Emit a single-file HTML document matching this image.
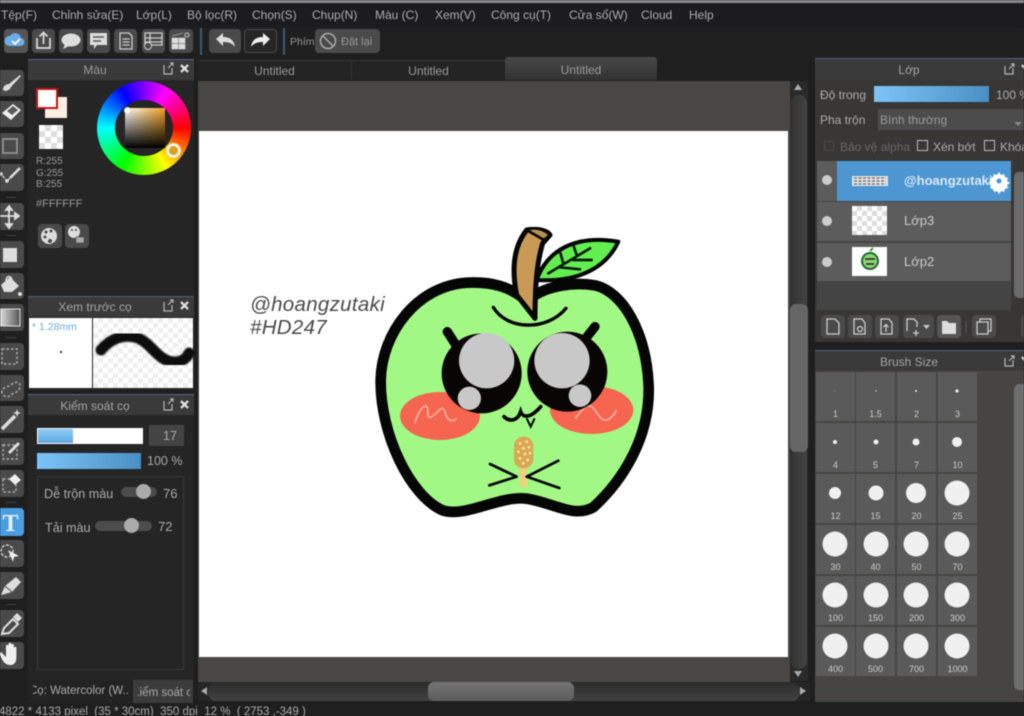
<!DOCTYPE html>
<html lang="vi"><head><meta charset="utf-8"><title>MediBang Paint</title>
<style>
html,body{margin:0;padding:0;background:#1f1f1f}
#a{position:relative;width:1024px;height:716px;overflow:hidden;background:#1f1f1f;font-family:"Liberation Sans",sans-serif;color:#adadad;font-size:12px;filter:blur(.5px)}
#a div{position:absolute;box-sizing:border-box}
.t{white-space:nowrap;line-height:14px}
.b{background:#4a4a4a;border-radius:4px}
.h{background:#3b3a3a;border-top:1px solid #4b6a85}
.c{text-align:center}
.cell{background:#5a5a5a;width:39px;height:49px}
.n{font-size:9px;color:#ccc;white-space:nowrap;line-height:10px;text-align:center;width:39px}
svg{position:absolute;left:0;top:0}
</style></head><body><div id="a">
<div style="left:0;top:0;width:1024px;height:3px;background:#8a8a8a"></div>
<div style="left:0;top:3px;width:1024px;height:24px;background:#1c1c1e"></div>
<div class="t" style="left:1px;top:8px">Tệp(F)</div>
<div class="t" style="left:52px;top:8px">Chỉnh sửa(E)</div>
<div class="t" style="left:136px;top:8px">Lớp(L)</div>
<div class="t" style="left:187px;top:8px">Bộ lọc(R)</div>
<div class="t" style="left:252px;top:8px">Chọn(S)</div>
<div class="t" style="left:312px;top:8px">Chụp(N)</div>
<div class="t" style="left:375px;top:8px">Màu (C)</div>
<div class="t" style="left:435px;top:8px">Xem(V)</div>
<div class="t" style="left:491px;top:8px">Công cụ(T)</div>
<div class="t" style="left:569px;top:8px">Cửa sổ(W)</div>
<div class="t" style="left:641px;top:8px">Cloud</div>
<div class="t" style="left:689px;top:8px">Help</div>

<!-- toolbar buttons -->
<div class="b" style="left:4px;top:29px;width:24px;height:24px;background:#555"></div>
<div class="b" style="left:32px;top:29px;width:23px;height:24px"></div>
<div class="b" style="left:59px;top:29px;width:24px;height:24px"></div>
<div class="b" style="left:87px;top:29px;width:23px;height:24px"></div>
<div class="b" style="left:114px;top:29px;width:23px;height:24px"></div>
<div class="b" style="left:142px;top:29px;width:23px;height:24px"></div>
<div class="b" style="left:169px;top:29px;width:24px;height:24px"></div>
<div style="left:200px;top:28px;width:2px;height:27px;background:#3f5a72"></div>
<div class="b" style="left:209px;top:29px;width:32px;height:24px"></div>
<div class="b" style="left:244px;top:29px;width:33px;height:24px;background:#262626;border:1px solid #4a4a4a"></div>
<div style="left:283px;top:28px;width:2px;height:27px;background:#3f5a72"></div>
<div class="t" style="left:290px;top:35px;font-size:10.5px;color:#999">Phím</div>
<div class="b" style="left:315px;top:29px;width:65px;height:24px"></div>
<div class="t" style="left:341px;top:35px;font-size:11px;color:#999">Đặt lại</div>

<!-- left tool strip -->
<div class="b" style="left:-4px;top:70px;width:28px;height:26px"></div>
<div class="b" style="left:-4px;top:101px;width:28px;height:26px"></div>
<div class="b" style="left:-4px;top:133px;width:28px;height:26px"></div>
<div class="b" style="left:-4px;top:164px;width:28px;height:27px"></div>
<div style="left:6px;top:197px;width:10px;height:1px;background:#444"></div>
<div class="b" style="left:-4px;top:203px;width:28px;height:27px"></div>
<div style="left:6px;top:235px;width:10px;height:1px;background:#444"></div>
<div class="b" style="left:-4px;top:241px;width:28px;height:27px"></div>
<div class="b" style="left:-4px;top:273px;width:28px;height:26px"></div>
<div class="b" style="left:-4px;top:304px;width:28px;height:27px"></div>
<div style="left:6px;top:337px;width:10px;height:1px;background:#444"></div>
<div class="b" style="left:-4px;top:343px;width:28px;height:27px"></div>
<div class="b" style="left:-4px;top:375px;width:28px;height:26px"></div>
<div class="b" style="left:-4px;top:406px;width:28px;height:27px"></div>
<div class="b" style="left:-4px;top:438px;width:28px;height:27px"></div>
<div class="b" style="left:-4px;top:470px;width:28px;height:27px"></div>
<div style="left:6px;top:502px;width:10px;height:1px;background:#444"></div>
<div class="b" style="left:-4px;top:508px;width:28px;height:28px;background:#4a9ee0"></div>
<div class="b" style="left:-4px;top:540px;width:28px;height:27px"></div>
<div class="b" style="left:-4px;top:572px;width:28px;height:27px"></div>
<div style="left:6px;top:604px;width:10px;height:1px;background:#444"></div>
<div class="b" style="left:-4px;top:610px;width:28px;height:27px"></div>
<div class="b" style="left:-4px;top:642px;width:28px;height:27px"></div>

<!-- colour panel -->
<div style="left:28px;top:59px;width:166px;height:236px;background:#252525"></div>
<div class="h" style="left:28px;top:59px;width:166px;height:21px"></div>
<div class="t c" style="left:28px;top:63px;width:134px;color:#999">Màu</div>
<div style="left:97px;top:81px;width:94px;height:94px;border-radius:50%;background:conic-gradient(from 90deg,#f00,#ff0 60deg,#0f0 120deg,#0ff 180deg,#00f 240deg,#f0f 300deg,#f00)"></div>
<div style="left:115px;top:100px;width:58px;height:56px;border-radius:50%;background:#252525"></div>
<div style="left:125px;top:108px;width:40px;height:40px;background:linear-gradient(to bottom,transparent,#000),linear-gradient(to right,#fff,#f0a020)"></div>
<div style="left:124px;top:107px;width:7px;height:7px;border-radius:50%;border:1px solid #ddd;background:#fff"></div>
<div style="left:166px;top:143px;width:15px;height:15px;border-radius:50%;border:3px solid #f2f2e0;background:#d8a020"></div>
<div style="left:45px;top:97px;width:22px;height:21px;background:#fdeee2"></div>
<div style="left:36px;top:88px;width:22px;height:21px;background:#fff;border:2px solid #c01818"></div>
<div style="left:39px;top:125px;width:24px;height:24px;background:repeating-conic-gradient(#ddd 0 25%,#fff 0 50%) 0 0/12px 12px"></div>
<div class="t" style="left:36px;top:156px;font-size:10px;line-height:11.5px;color:#999">R:255<br>G:255<br>B:255</div>
<div class="t" style="left:36px;top:197px;font-size:11px;color:#999">#FFFFFF</div>
<div class="b" style="left:38px;top:224px;width:24px;height:24px"></div>
<div class="b" style="left:65px;top:224px;width:24px;height:24px"></div>

<!-- brush preview -->
<div style="left:28px;top:296px;width:166px;height:94px;background:#252525"></div>
<div class="h" style="left:28px;top:296px;width:166px;height:21px"></div>
<div class="t c" style="left:28px;top:300px;width:134px;color:#a5a5a5">Xem trước cọ</div>
<div style="left:29px;top:318px;width:63px;height:70px;background:#fff"></div>
<div class="t" style="left:32px;top:320px;font-size:10.5px;color:#6aa9dc">* 1.28mm</div>
<div style="left:60px;top:351px;width:2px;height:2px;background:#333"></div>
<div style="left:93px;top:318px;width:100px;height:70px;background:repeating-conic-gradient(#eee 0 25%,#fff 0 50%) 0 0/10px 10px"></div>

<!-- brush control -->
<div style="left:28px;top:394px;width:166px;height:288px;background:#252525"></div>
<div class="h" style="left:28px;top:394px;width:166px;height:21px"></div>
<div class="t c" style="left:28px;top:399px;width:134px;color:#a5a5a5">Kiểm soát cọ</div>
<div style="left:37px;top:428px;width:106px;height:16px;background:#fff"></div>
<div style="left:38px;top:429px;width:35px;height:14px;background:linear-gradient(#8ccbf5,#5fa8e0)"></div>
<div style="left:149px;top:425px;width:35px;height:21px;background:#444"></div>
<div class="t" style="left:163px;top:429px;color:#aaa;font-size:12.5px">17</div>
<div style="left:37px;top:453px;width:104px;height:16px;background:linear-gradient(90deg,#7cc4f8,#4a8fc4)"></div>
<div class="t" style="left:147px;top:454px;color:#aaa;font-size:12.5px">100 %</div>
<div style="left:37px;top:476px;width:147px;height:194px;border:1px solid #3a3a3a"></div>
<div class="t" style="left:44px;top:487px;color:#aaa;font-size:12.6px">Dễ trộn màu</div>
<div style="left:121px;top:487px;width:36px;height:10px;border-radius:5px;background:#4c4c4c"></div>
<div style="left:136px;top:484px;width:15px;height:15px;border-radius:50%;background:#aaa"></div>
<div class="t" style="left:163px;top:487px;color:#aaa;font-size:13px">76</div>
<div class="t" style="left:45px;top:521px;color:#aaa;font-size:12.6px">Tải màu</div>
<div style="left:95px;top:521px;width:57px;height:10px;border-radius:5px;background:#4c4c4c"></div>
<div style="left:124px;top:518px;width:15px;height:15px;border-radius:50%;background:#aaa"></div>
<div class="t" style="left:158px;top:520px;color:#aaa;font-size:13px">72</div>
<div style="left:28px;top:680px;width:104px;height:23px;background:#232323"></div>
<div class="t" style="left:33px;top:684px;font-size:11.5px;color:#aaa;width:96px;overflow:hidden;text-indent:-4px">Cọ: Watercolor (W..</div>
<div style="left:133px;top:680px;width:60px;height:23px;background:#3c3c3c;overflow:hidden"></div>
<div class="t" style="left:138px;top:686px;font-size:11.5px;width:52px;overflow:hidden;color:#aaa;text-indent:-6px">Kiểm soát c</div>
<div class="t" style="left:-1px;top:705px;font-size:11.5px;color:#aaa">4822 * 4133 pixel &nbsp;(35 * 30cm) &nbsp;350 dpi &nbsp;12 % &nbsp;( 2753 ,-349 )</div>

<!-- tabs -->
<div style="left:198px;top:60px;width:455px;height:20px;background:#242424;border-top:1px solid #333"></div>
<div style="left:351px;top:60px;width:1px;height:20px;background:#333"></div>
<div style="left:505px;top:57px;width:152px;height:23px;background:linear-gradient(#484848,#333);border-radius:3px 3px 0 0"></div>
<div class="t c" style="left:198px;top:64px;width:153px;color:#999">Untitled</div>
<div class="t c" style="left:352px;top:64px;width:153px;color:#999">Untitled</div>
<div class="t c" style="left:505px;top:63px;width:152px;color:#999">Untitled</div>

<!-- canvas -->
<div style="left:198px;top:81px;width:592px;height:620px;background:#484746"></div>
<div style="left:199px;top:131px;width:589px;height:526px;background:#fff"></div>
<div class="t" style="left:250px;top:293px;font-size:20.5px;line-height:23px;font-style:italic;color:#4a4a4a;letter-spacing:.3px">@hoangzutaki<br>#HD247</div>
<div style="left:790px;top:81px;width:18px;height:600px;background:#2a2a2a"></div>
<div style="left:791px;top:95px;width:16px;height:574px;background:linear-gradient(90deg,#333,#444);border-radius:8px"></div>
<div style="left:790px;top:304px;width:18px;height:148px;background:#666;border-radius:6px"></div>
<div style="left:198px;top:682px;width:612px;height:19px;background:#262626"></div>
<div style="left:208px;top:682px;width:592px;height:19px;background:linear-gradient(#2c2c2c,#424242);border-radius:8px"></div>
<div style="left:428px;top:682px;width:146px;height:19px;background:linear-gradient(#757575,#5c5c5c);border-radius:6px"></div>

<!-- layer panel -->
<div style="left:815px;top:58px;width:209px;height:284px;background:#383736"></div>
<div class="h" style="left:815px;top:58px;width:209px;height:22px"></div>
<div class="t c" style="left:815px;top:63px;width:188px;color:#a5a5a5">Lớp</div>
<div class="t" style="left:820px;top:88px;color:#aaa">Độ trong</div>
<div style="left:874px;top:86px;width:115px;height:16px;background:linear-gradient(90deg,#7cc4f8,#4a8fc4)"></div>
<div class="t" style="left:996px;top:88px;color:#aaa">100 %</div>
<div class="t" style="left:820px;top:113px;color:#aaa">Pha trộn</div>
<div style="left:878px;top:109px;width:146px;height:21px;background:#4c4c4c"></div>
<div class="t" style="left:880px;top:113px;color:#999">Bình thường</div>
<div style="left:824px;top:141px;width:10px;height:10px;border:1px solid #4a4a4a"></div>
<div class="t" style="left:840px;top:140px;color:#666">Bảo vệ alpha</div>
<div style="left:917px;top:140px;width:11px;height:11px;border:1px solid #bbb"></div>
<div class="t" style="left:933px;top:140px;color:#aaa">Xén bớt</div>
<div style="left:984px;top:140px;width:11px;height:11px;border:1px solid #bbb"></div>
<div class="t" style="left:1000px;top:140px;color:#aaa">Khóa</div>
<div style="left:817px;top:161px;width:194px;height:149px;background:#444"></div>
<div style="left:817px;top:161px;width:20px;height:40px;background:#5c5c5c"></div>
<div style="left:837px;top:161px;width:174px;height:40px;background:#4e96d2"></div>
<div style="left:817px;top:202px;width:194px;height:39px;background:#5c5c5c"></div>
<div style="left:817px;top:243px;width:194px;height:38px;background:#5c5c5c"></div>
<div style="left:852px;top:176px;width:36px;height:10px;background:#e4e4e4"></div>
<div style="left:852px;top:206px;width:35px;height:29px;background:repeating-conic-gradient(#ddd 0 25%,#fff 0 50%) 0 0/10px 10px"></div>
<div style="left:852px;top:247px;width:35px;height:29px;background:#fff"></div>
<div class="t" style="left:904px;top:174px;font-weight:bold;font-size:13px;color:#d8e8f4;width:90px;overflow:hidden">@hoangzutaki</div>
<div class="t" style="left:904px;top:214px;font-size:13px;color:#ccc">Lớp3</div>
<div class="t" style="left:904px;top:255px;font-size:13px;color:#ccc">Lớp2</div>
<div style="left:1014px;top:172px;width:10px;height:126px;background:#6a6a6a;border-radius:5px 0 0 5px"></div>
<div class="b" style="left:821px;top:315px;width:24px;height:23px"></div>
<div class="b" style="left:848px;top:315px;width:24px;height:23px"></div>
<div class="b" style="left:875px;top:315px;width:24px;height:23px"></div>
<div class="b" style="left:903px;top:315px;width:31px;height:23px"></div>
<div class="b" style="left:937px;top:315px;width:24px;height:23px;background:#555"></div>
<div class="b" style="left:972px;top:315px;width:24px;height:23px"></div>
<div class="b" style="left:1021px;top:315px;width:10px;height:23px"></div>

<!-- brush size panel -->
<div style="left:815px;top:350px;width:209px;height:352px;background:#464544"></div>
<div class="h" style="left:815px;top:350px;width:209px;height:21px"></div>
<div class="t c" style="left:815px;top:355px;width:188px;color:#a5a5a5">Brush Size</div>
<div style="left:1014px;top:384px;width:10px;height:306px;background:#6e6e6e;border-radius:5px 0 0 5px"></div>

<div class="cell" style="left:816px;top:372px"></div><div class="cell" style="left:856px;top:372px"></div><div class="cell" style="left:897px;top:372px"></div><div class="cell" style="left:938px;top:372px"></div>
<div class="cell" style="left:816px;top:423px"></div><div class="cell" style="left:856px;top:423px"></div><div class="cell" style="left:897px;top:423px"></div><div class="cell" style="left:938px;top:423px"></div>
<div class="cell" style="left:816px;top:474px"></div><div class="cell" style="left:856px;top:474px"></div><div class="cell" style="left:897px;top:474px"></div><div class="cell" style="left:938px;top:474px"></div>
<div class="cell" style="left:816px;top:525px"></div><div class="cell" style="left:856px;top:525px"></div><div class="cell" style="left:897px;top:525px"></div><div class="cell" style="left:938px;top:525px"></div>
<div class="cell" style="left:816px;top:576px"></div><div class="cell" style="left:856px;top:576px"></div><div class="cell" style="left:897px;top:576px"></div><div class="cell" style="left:938px;top:576px"></div>
<div class="cell" style="left:816px;top:627px"></div><div class="cell" style="left:856px;top:627px"></div><div class="cell" style="left:897px;top:627px"></div><div class="cell" style="left:938px;top:627px"></div>

<div class="n" style="left:816px;top:409px">1</div><div class="n" style="left:856px;top:409px">1.5</div><div class="n" style="left:897px;top:409px">2</div><div class="n" style="left:938px;top:409px">3</div>
<div class="n" style="left:816px;top:460px">4</div><div class="n" style="left:856px;top:460px">5</div><div class="n" style="left:897px;top:460px">7</div><div class="n" style="left:938px;top:460px">10</div>
<div class="n" style="left:816px;top:511px">12</div><div class="n" style="left:856px;top:511px">15</div><div class="n" style="left:897px;top:511px">20</div><div class="n" style="left:938px;top:511px">25</div>
<div class="n" style="left:816px;top:562px">30</div><div class="n" style="left:856px;top:562px">40</div><div class="n" style="left:897px;top:562px">50</div><div class="n" style="left:938px;top:562px">70</div>
<div class="n" style="left:816px;top:613px">100</div><div class="n" style="left:856px;top:613px">150</div><div class="n" style="left:897px;top:613px">200</div><div class="n" style="left:938px;top:613px">300</div>
<div class="n" style="left:816px;top:664px">400</div><div class="n" style="left:856px;top:664px">500</div><div class="n" style="left:897px;top:664px">700</div><div class="n" style="left:938px;top:664px">1000</div>

<svg width="1024" height="716" viewBox="0 0 1024 716" fill="none">
<!-- brush dots -->
<g fill="#f0f0f0">
<circle cx="835" cy="391" r=".4"/><circle cx="876" cy="391" r=".6"/><circle cx="916" cy="391" r="1"/><circle cx="957" cy="391" r="1.6"/>
<circle cx="835" cy="442" r="2"/><circle cx="876" cy="442" r="2.5"/><circle cx="916" cy="442" r="3.5"/><circle cx="957" cy="442" r="5"/>
<circle cx="835" cy="493" r="6"/><circle cx="876" cy="493" r="7.5"/><circle cx="916" cy="493" r="10"/><circle cx="957" cy="493" r="12.5"/>
<circle cx="835" cy="544" r="12.5"/><circle cx="876" cy="544" r="12.5"/><circle cx="916" cy="544" r="12.5"/><circle cx="957" cy="544" r="12.5"/>
<circle cx="835" cy="595" r="12.5"/><circle cx="876" cy="595" r="12.5"/><circle cx="916" cy="595" r="12.5"/><circle cx="957" cy="595" r="12.5"/>
<circle cx="835" cy="646" r="12.5"/><circle cx="876" cy="646" r="12.5"/><circle cx="916" cy="646" r="12.5"/><circle cx="957" cy="646" r="12.5"/>
</g>
<!-- toolbar icons -->
<path d="M9 46h11a4 4 0 0 0 1-8 6 6 0 0 0-11-2 5 5 0 0 0-1 10z" fill="#6aaee8"/>
<path d="M12 41l3 3 5-5" stroke="#fff" stroke-width="1.8"/>
<path d="M37 38v10h13V38M43.500 44V33M39.500 36.500l4-4 4 4" stroke="#ddd" stroke-width="1.7"/>
<ellipse cx="71" cy="40" rx="9.500" ry="6.500" fill="#ddd"/><path d="M65 44l-2 5 6-3z" fill="#ddd"/>
<path d="M90 33h17v12H97l-3 4v-4h-4z" fill="#ddd"/><path d="M93 37h11M93 41h8" stroke="#555" stroke-width="1.500"/>
<path d="M120 33h9l3 3v13h-12zM122.500 39h7M122.500 42h7M122.500 45h7" stroke="#ccc" stroke-width="1.300"/>
<path d="M145 33h17v12h-17zM145 38h17M145 42h17M150 33v12" stroke="#ccc" stroke-width="1.300"/><circle cx="148" cy="46" r="3.500" fill="#4a4a4a" stroke="#ccc"/>
<path d="M172 38h6v5h-6zM179 38h6v5h-6zM172 44h6v5h-6zM179 44h6v5h-6zM172 36l11-3" fill="#ddd" stroke="#ddd" stroke-width=".6"/><circle cx="187" cy="35" r="2" stroke="#ccc"/>
<path d="M216 39l7-6v4c8 0 11 4 12 10-3-4-7-5-12-5v4z" fill="#ddd"/>
<path d="M270 39l-7-6v4c-8 0-11 4-12 10 3-4 7-5 12-5v4z" fill="#eee"/>
<circle cx="328" cy="41" r="7.500" stroke="#aaa" stroke-width="1.500"/><path d="M323 36l10 10" stroke="#aaa" stroke-width="1.500"/>
<!-- panel header float / close icons -->
<g stroke="#b5b5b5" stroke-width="1.200">
<path d="M164 65v9h8v-6M168 68l5-5M170 63h3v3"/>
<path d="M164 302v9h8v-6M168 305l5-5M170 300h3v3"/>
<path d="M164 401v9h8v-6M168 404l5-5M170 399h3v3"/>
<path d="M1005 66v8h8v-6M1009 69l5-5M1011 64h3v3"/>
<path d="M1005 358v8h8v-6M1009 361l5-5M1011 356h3v3"/>
</g>
<g stroke="#ddd" stroke-width="2.300">
<path d="M181 65l7 7M188 65l-7 7"/><path d="M181 302l7 7M188 302l-7 7"/><path d="M181 401l7 7M188 401l-7 7"/>
<path d="M1022 65l6 7"/><path d="M1022 357l6 7"/>
</g>
<!-- palette icons -->
<circle cx="49" cy="236" r="8" fill="#ddd"/><g fill="#4a4a4a"><circle cx="46" cy="232" r="1.500"/><circle cx="51" cy="231" r="1.500"/><circle cx="45" cy="237" r="1.500"/><circle cx="50" cy="241" r="2"/></g>
<circle cx="74" cy="232" r="6" fill="#ddd"/><g fill="#4a4a4a"><circle cx="72" cy="230" r="1"/><circle cx="76" cy="230" r="1"/></g><rect x="76" y="237" width="8" height="6" fill="#aaa" stroke="#4a4a4a" stroke-width=".6"/>
<!-- left tool icons -->
<path d="M3 90c3 2 7 0 8-3l10-11-1-1-11 9c-3 0-6 2-6 6z" fill="#ddd"/>
<path d="M2 113l11-9 8 6-10 10z" fill="#eee"/><path d="M7 111l6-5 5 4-6 5z" fill="#5a5a5a"/>
<rect x="3" y="139" width="14" height="14" stroke="#999" stroke-width="1.600"/>
<path d="M0 173l7 8 4-4" stroke="#ccc" stroke-width="1.600" stroke-dasharray="2.500 1.500"/><path d="M10 178l10-10" stroke="#ddd" stroke-width="2.600"/><circle cx="7" cy="181" r="1.800" fill="#ddd"/><circle cx="1" cy="174" r="1.800" fill="#ddd"/>
<path d="M9 207v20M0 216h18M9 206l-3 4h6zM9 228l-3-4h6zM19 216l-4-3v6z" stroke="#ddd" stroke-width="1.800" fill="#ddd"/>
<rect x="3" y="248" width="14" height="14" fill="#ddd"/>
<path d="M1 285l9-8 9 9-7 6H4z" fill="#ddd"/><path d="M6 281c0-6 6-6 6 0" stroke="#ddd" stroke-width="1.500"/><circle cx="20" cy="294" r="2" fill="#ddd"/>
<defs><linearGradient id="g1"><stop offset="0" stop-color="#ddd"/><stop offset="1" stop-color="#555"/></linearGradient>
<filter id="soft"><feGaussianBlur stdDeviation=".9"/></filter></defs>
<rect x="0" y="309" width="20" height="17" fill="url(#g1)" stroke="#ddd"/>
<rect x="2" y="349" width="15" height="15" stroke="#aaa" stroke-width="1.500" stroke-dasharray="2.500 2"/>
<path d="M2 393c-2-6 8-6 10-9 4-3 9-2 8 3-1 6-6 5-9 8-3 3-7 2-9-2z" stroke="#aaa" stroke-width="1.500" stroke-dasharray="2.500 2"/>
<path d="M2 429l13-13" stroke="#ddd" stroke-width="3.500"/><path d="M17 409l1 3 3 1-3 1-1 3-1-3-3-1 3-1z" fill="#ddd"/>
<rect x="3" y="445" width="14" height="14" stroke="#aaa" stroke-width="1.400" stroke-dasharray="2.500 2"/><path d="M9 453l10-10" stroke="#ddd" stroke-width="3"/>
<rect x="3" y="479" width="13" height="13" stroke="#aaa" stroke-width="1.400" stroke-dasharray="2.500 2"/><path d="M9 479l6-5 6 6-6 5z" fill="#eee"/>
<text x="10.500" y="531" text-anchor="middle" font-family="Liberation Serif,serif" font-weight="bold" font-size="24" fill="#e4f0fa">T</text>
<circle cx="7" cy="551" r="6" stroke="#ccc" stroke-width="1.500" stroke-dasharray="3 1.500"/><path d="M8 550l11 6-5 1-1 5z" fill="#eee"/>
<path d="M1 595l4-9 11-9 5 5-9 10z" fill="#ddd"/><path d="M5 586l7 6" stroke="#4a4a4a"/>
<path d="M2 634l2-6 9-9 5 5-9 9z" stroke="#ddd" stroke-width="2"/><path d="M13 617l4-4 5 5-4 4z" fill="#ddd"/>
<path d="M1 652l5 5v-11a1.300 1.300 0 0 1 2.600 0v6-8a1.300 1.300 0 0 1 2.600 0v8-7a1.300 1.300 0 0 1 2.600 0v8-5a1.300 1.300 0 0 1 2.600 0v9c0 5-2 8-6 8-4 0-6-2-8-5l-3-6c0-2 2-2 3-2z" fill="#eee"/>
<!-- scroll arrows -->
<g fill="#aaa"><path d="M798 84l-4 6h8zM798 677l-4-6h8zM201 691l6-4v8zM806 691l-6-4v8z"/></g>
<!-- brush stroke preview -->
<path d="M101 350C110 339 124 333 138 338C152 344 158 361 174 362C182 362 187 358 189 353" stroke="#0c0c0c" stroke-width="11" stroke-linecap="round" filter="url(#soft)"/>
<!-- layer visibility dots -->
<g fill="#ccc"><circle cx="827" cy="180" r="5"/><circle cx="827" cy="221" r="5"/><circle cx="827" cy="262" r="5"/></g>
<!-- layer thumbs -->
<path d="M854 178h32M854 181h32M854 184h32" stroke="#666" stroke-width="1.200" stroke-dasharray="3 1.500"/>
<path d="M870 251l3-3" stroke="#3a2" stroke-width="2"/>
<circle cx="870" cy="261" r="8" fill="#8fd66f" stroke="#263" stroke-width="2"/><path d="M865 259h10M866 264h8" stroke="#333" stroke-width="1.800"/>
<path d="M999 172l2 3 3-1 1 3 3 1-1 3 3 2-3 2 1 3-3 1-1 3-3-1-2 3-2-3-3 1-1-3-3-1 1-3-3-2 3-2-1-3 3-1 1-3 3 1z" fill="#fff"/><circle cx="999" cy="181" r="2.500" fill="#4e96d2"/>
<!-- layer action icons -->
<g stroke="#ccc" stroke-width="1.300">
<path d="M827 319h8l4 4v11h-12z"/><path d="M854 319h8l3 4v11h-11z"/><circle cx="860" cy="329" r="2.500"/>
<path d="M881 319h8l3 4v11h-11zM886 332v-7M883.500 327l2.500-2.500 2.500 2.500"/>
<path d="M907 331v-12h7l3 3v5M916 330v6M913 333h6"/>
<path d="M977 322h11v12h-11zM980 322v-3h11v12h-3"/>
</g>
<path d="M923 325h7l-3.500 4z" fill="#ccc"/>
<path d="M942 321h5l2 2h7v11h-14z" fill="#ddd"/>
<path d="M966 321v12" stroke="#555"/>
<path d="M1014 122h8l-4 4z" fill="#888"/>

<!-- apple illustration, drawn in zoom coordinates -->
<g transform="translate(360 210) scale(.33333)">
<path d="M515 262C560 228 640 215 705 226C790 245 860 370 866 530C870 680 790 810 700 892C640 925 580 878 500 866C420 856 320 922 250 902C150 860 60 670 62 510C65 370 170 228 320 218C400 214 450 232 495 268Z" fill="#a2f884" stroke="#050505" stroke-width="32" stroke-linejoin="round"/>
<path d="M470 255C455 180 460 110 500 60C530 55 560 60 570 75L548 100C530 160 525 230 525 325Z" fill="#c89a55" stroke="#050505" stroke-width="15" stroke-linejoin="round"/>
<path d="M500 60L552 90L570 75C550 55 520 50 500 60Z" fill="#b89050" stroke="#050505" stroke-width="8"/>
<path d="M530 210C560 125 640 72 775 95C740 170 660 218 530 210Z" fill="#62ee50" stroke="#050505" stroke-width="12" stroke-linejoin="round"/>
<path d="M565 190L690 115M610 160L600 125M650 135L640 105M600 172L660 178M640 150L695 150" stroke="#0a1a0a" stroke-width="8" stroke-linecap="round"/>
<path d="M400 292C440 360 560 365 618 295" stroke="#050505" stroke-width="10" stroke-linecap="round"/>
<ellipse cx="240" cy="618" rx="120" ry="72" fill="#f5654f"/>
<ellipse cx="695" cy="600" rx="125" ry="72" fill="#f5654f"/>
<path d="M165 640c5-25 25-60 35-50 10 12-5 40 15 30s30-40 40-15c5 25 20 35 35 20" stroke="#fbb0a0" stroke-width="5"/>
<path d="M645 625c15-15 30-45 50-35 15 10 25 45 45 40 12-3 22-15 30-30" stroke="#fbb0a0" stroke-width="5"/>
<path d="M262 365L292 412M705 350L672 392" stroke="#050505" stroke-width="28" stroke-linecap="round"/>
<circle cx="365" cy="490" r="120" fill="#0a0505"/>
<circle cx="622" cy="485" r="120" fill="#0a0505"/>
<circle cx="380" cy="452" r="83" fill="#c8c8c8"/>
<circle cx="606" cy="452" r="83" fill="#c8c8c8"/>
<circle cx="328" cy="565" r="35" fill="#c8c8c8"/>
<circle cx="660" cy="557" r="34" fill="#c8c8c8"/>
<path d="M432 620c15 15 40 15 50-15 5 15 25 25 60-15" stroke="#050505" stroke-width="11" stroke-linecap="round"/>
<path d="M500 625l12 25 12-25" stroke="#050505" stroke-width="6"/>
<rect x="480" y="760" width="20" height="70" fill="#f0d080"/>
<rect x="462" y="680" width="58" height="95" rx="28" fill="#d9a855"/>
<g fill="#f8e8b0"><circle cx="480" cy="700" r="4"/><circle cx="500" cy="695" r="4"/><circle cx="490" cy="715" r="4"/><circle cx="507" cy="712" r="4"/><circle cx="475" cy="725" r="4"/><circle cx="495" cy="732" r="4"/><circle cx="510" cy="730" r="4"/><circle cx="480" cy="745" r="4"/><circle cx="503" cy="750" r="4"/><circle cx="490" cy="760" r="4"/></g>
<path d="M390 762L470 800L388 826M595 752L500 800L598 834" stroke="#050505" stroke-width="8" stroke-linecap="round" stroke-linejoin="round"/>
</g>
</svg>
</div></body></html>
